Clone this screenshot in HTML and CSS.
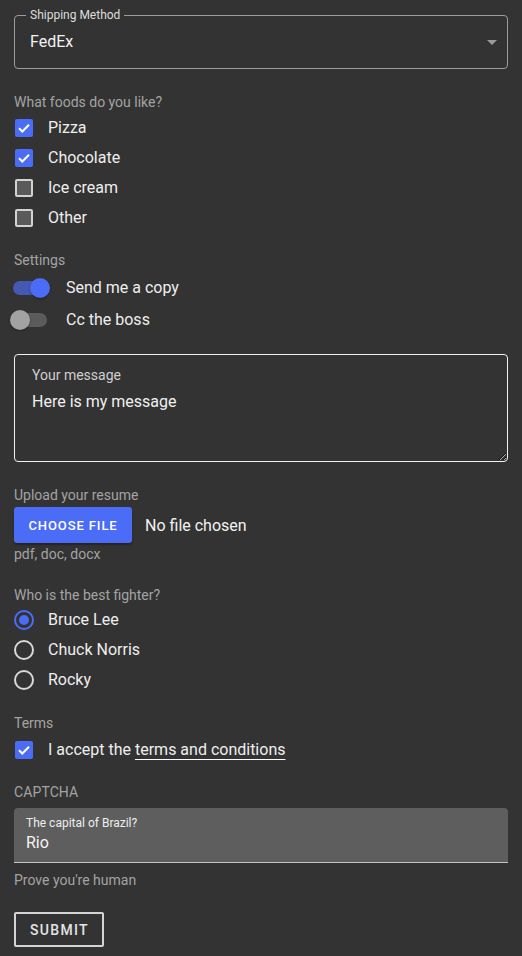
FILE: index.html
```html
<!DOCTYPE html>
<html lang="en">
<head>
<meta charset="utf-8">
<title>Form</title>
<link rel="stylesheet" href="styles.css">
</head>
<body>
<form class="page">
  <fieldset class="select">
    <legend class="select-legend">Shipping Method</legend>
    <div class="select-row">
      <span class="select-value">FedEx</span>
      <span class="select-arrow"></span>
    </div>
  </fieldset>

  <div class="group foods">
    <div class="group-label">What foods do you like?</div>
    <div class="check-row"><span class="cb checked"><svg viewBox="0 0 18 18" width="18" height="18"><path d="M4 9.3l3.3 3.2L14 5.8" fill="none" stroke="#fff" stroke-width="2"/></svg></span><span class="row-text">Pizza</span></div>
    <div class="check-row"><span class="cb checked"><svg viewBox="0 0 18 18" width="18" height="18"><path d="M4 9.3l3.3 3.2L14 5.8" fill="none" stroke="#fff" stroke-width="2"/></svg></span><span class="row-text">Chocolate</span></div>
    <div class="check-row"><span class="cb"></span><span class="row-text">Ice cream</span></div>
    <div class="check-row"><span class="cb"></span><span class="row-text">Other</span></div>
  </div>

  <div class="group settings">
    <div class="group-label">Settings</div>
    <div class="switch-row"><span class="switch on"></span><span class="row-text">Send me a copy</span></div>
    <div class="switch-row"><span class="switch"></span><span class="row-text">Cc the boss</span></div>
  </div>

  <div class="message">
    <div class="message-label">Your message</div>
    <textarea class="message-input">Here is my message</textarea>
  </div>

  <div class="group upload">
    <div class="group-label">Upload your resume</div>
    <div class="upload-row">
      <span class="choose-btn">CHOOSE FILE</span>
      <span class="no-file">No file chosen</span>
    </div>
    <div class="helper">pdf, doc, docx</div>
  </div>

  <div class="group fighter">
    <div class="group-label">Who is the best fighter?</div>
    <div class="radio-row"><span class="radio selected"></span><span class="row-text">Bruce Lee</span></div>
    <div class="radio-row"><span class="radio"></span><span class="row-text">Chuck Norris</span></div>
    <div class="radio-row"><span class="radio"></span><span class="row-text">Rocky</span></div>
  </div>

  <div class="group terms">
    <div class="group-label">Terms</div>
    <div class="check-row"><span class="cb checked"><svg viewBox="0 0 18 18" width="18" height="18"><path d="M4 9.3l3.3 3.2L14 5.8" fill="none" stroke="#fff" stroke-width="2"/></svg></span><span class="row-text">I accept the <span class="link">terms and conditions</span></span></div>
  </div>

  <div class="group captcha">
    <div class="group-label caps">CAPTCHA</div>
    <div class="filled">
      <div class="filled-label">The capital of Brazil?</div>
      <div class="filled-value">Rio</div>
    </div>
    <div class="helper human">Prove you're human</div>
  </div>

  <div class="submit-wrap"><span class="submit">SUBMIT</span></div>
</form>
</body>
</html>
```

FILE: styles.css
```css
html, body {
  margin: 0;
  padding: 0;
  background: #333333;
  color-scheme: dark;
}
body {
  font-family: Roboto, "Liberation Sans", sans-serif;
  color: #eeeeee;
  width: 522px;
  height: 956px;
  overflow: hidden;
}
.page {
  padding: 8px 14px 0 14px;
}

/* select */
.select {
  margin: 0;
  border: 1px solid #9c9c9c;
  border-radius: 4px;
  padding: 0 10px 0 11px;
  min-width: 0;
}
.select-legend {
  padding: 0 4px;
  font-size: 12px;
  line-height: 14px;
  color: #dddddd;
}
.select-row {
  display: flex;
  align-items: center;
  justify-content: space-between;
  padding: 10px 0 16px 4px;
  height: 20px;
}
.select-value {
  font-size: 16px;
  line-height: 20px;
  color: #f2f2f2;
}
.select-arrow {
  width: 0;
  height: 0;
  border-left: 5px solid transparent;
  border-right: 5px solid transparent;
  border-top: 5px solid #9a9a9a;
  margin-top: 1px;
}

/* groups */
.group-label {
  font-size: 14px;
  line-height: 20px;
  color: #a3a3a3;
}
.foods { margin-top: 23px; }
.foods .group-label { margin-bottom: 1px; }
.row-text {
  font-size: 16px;
  line-height: 20px;
  color: #eeeeee;
}
.check-row, .radio-row {
  display: flex;
  align-items: center;
  height: 30px;
}
.cb {
  box-sizing: border-box;
  width: 18px;
  height: 18px;
  margin-left: 1px;
  margin-right: 15px;
  border-radius: 2px;
  border: 2px solid #d2d2d2;
  background: #5a5a5a;
  display: flex;
  align-items: center;
  justify-content: center;
  flex: none;
}
.cb.checked {
  border: none;
  background: #4b6cf6;
}
.cb svg { display: block; }

.settings { margin-top: 17px; }
.settings .group-label { margin-bottom: 2px; }
.switch-row {
  display: flex;
  align-items: center;
  height: 32px;
}
.switch {
  position: relative;
  width: 40px;
  height: 20px;
  margin-left: -4px;
  margin-right: 16px;
  flex: none;
}
.switch::before {
  content: "";
  position: absolute;
  left: 3px;
  top: 3px;
  width: 34px;
  height: 14px;
  border-radius: 7px;
  background: #5b5b5b;
}
.switch::after {
  content: "";
  position: absolute;
  left: 0;
  top: 0;
  width: 20px;
  height: 20px;
  border-radius: 50%;
  background: #a2a2a2;
  box-shadow: 0 1px 2px rgba(0,0,0,0.35);
}
.switch.on::before { background: #4459b3; }
.switch.on::after { left: 20px; background: #4b6cf6; }

/* message */
.message {
  margin-top: 18px;
  border: 1px solid #f0f0f0;
  border-radius: 4px;
  padding: 10px 0 0 17px;
}
.message-label {
  font-size: 14px;
  line-height: 20px;
  color: #cfcfcf;
}
.message-input {
  display: block;
  box-sizing: border-box;
  width: 100%;
  height: 71px;
  margin: 5px 0 0 0;
  padding: 0;
  border: none;
  outline: none;
  background: transparent;
  color: #f0f0f0;
  font-family: Roboto, "Liberation Sans", sans-serif;
  font-size: 16px;
  line-height: 24px;
  resize: vertical;
}

/* upload */
.upload { margin-top: 23px; }
.upload-row {
  display: flex;
  align-items: center;
  margin-top: 2px;
}
.choose-btn {
  display: flex;
  align-items: center;
  justify-content: center;
  width: 118px;
  height: 36px;
  border-radius: 3px;
  background: #4b6cf6;
  color: #ffffff;
  font-size: 13px;
  font-weight: 500;
  letter-spacing: 0.9px;
  box-shadow: 0 2px 2px rgba(0,0,0,0.3);
}
.no-file {
  margin-left: 13px;
  font-size: 16px;
  color: #f2f2f2;
}
.helper {
  font-size: 14px;
  line-height: 18px;
  color: #a3a3a3;
  margin-top: 2px;
}

/* radios */
.fighter { margin-top: 22px; }
.radio {
  box-sizing: border-box;
  width: 20px;
  height: 20px;
  border-radius: 50%;
  border: 2px solid #d8d8d8;
  margin-right: 14px;
  display: flex;
  align-items: center;
  justify-content: center;
  flex: none;
}
.radio.selected { border-color: #4b6cf6; }
.radio.selected::after {
  content: "";
  width: 10px;
  height: 10px;
  border-radius: 50%;
  background: #4b6cf6;
}

/* terms */
.terms { margin-top: 18px; }
.terms .group-label { margin-bottom: 2px; }
.link {
  text-decoration: underline;
  text-decoration-thickness: 1px;
  text-underline-offset: 4px;
  text-decoration-color: #ffffff;
}

/* captcha */
.captcha { margin-top: 17px; }
.caps { letter-spacing: 0.1px; }
.filled {
  margin-top: 6px;
  background: #5e5e5e;
  border-radius: 4px 4px 0 0;
  border-bottom: 1px solid #c4c4c4;
  padding: 7px 12px 7px 12px;
}
.filled-label {
  font-size: 12px;
  line-height: 16px;
  color: #eeeeee;
}
.filled-value {
  font-size: 16px;
  line-height: 24px;
  color: #f4f4f4;
}
.human { margin-top: 8px; }

.submit-wrap {
  margin-top: 23px;
  display: flex;
}
.submit {
  box-sizing: border-box;
  height: 35px;
  width: 90px;
  display: flex;
  align-items: center;
  justify-content: center;
  padding-left: 1px;
  border: 2px solid #d4d4d4;
  border-radius: 2px;
  color: #e4e4e4;
  font-size: 14px;
  font-weight: 500;
  letter-spacing: 1.3px;
}
```
